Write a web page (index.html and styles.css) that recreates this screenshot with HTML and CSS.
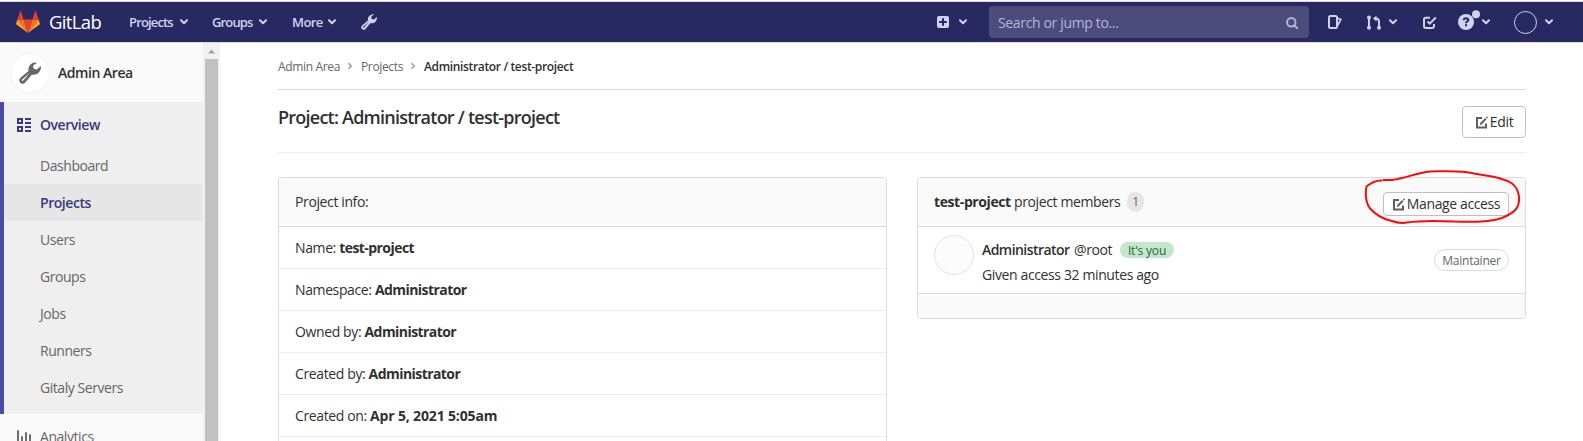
FILE: index.html
```
<!DOCTYPE html>
<html lang="en">
<head>
<meta charset="utf-8">
<title>Administrator / test-project</title>
<link rel="stylesheet" href="styles.css">
</head>
<body>
<svg class="defs" aria-hidden="true">
  <symbol id="chev" viewBox="0 0 8 6"><path d="M1 1.200 4 4.200 7 1.200" fill="none" stroke="currentColor" stroke-width="2" stroke-linecap="round" stroke-linejoin="round"/></symbol>
  <symbol id="sep" viewBox="0 0 6 8"><path d="M1.500 1.200 4.300 4 1.500 6.800" fill="none" stroke="#999" stroke-width="1.400"/></symbol>
  <symbol id="wrench" viewBox="0 0 16 16"><path fill-rule="evenodd" fill="currentColor" d="M11.200 0.400C9.300 0.700 7.500 2 7 4.200 6.800 5 6.800 5.800 6.900 6.500L1.100 11.400C0 12.300-.1 14 .9 15.050 1.900 16.100 3.600 16 4.500 14.900L9.300 9.200C11 9.500 12.900 9.200 14.200 7.900 15.700 6.500 16.200 4.700 15.800 2.900L13 5.500 10.700 4.900 10.200 2.800 13 .6C12.400.4 11.800.3 11.200.4ZM8.100 7.600 3.100 13.500C2.400 14.200 1.600 13.300 2.300 12.700Z"/></symbol>
  <symbol id="edit" viewBox="0 0 13 13"><path fill="none" stroke="currentColor" stroke-width="2" d="M7 2H2V11.500H11V7.500"/><path fill="currentColor" d="M4.800 9.200 5.300 6.700 10.200 1.900 11.600 3.300 6.900 8.200ZM10.800 1.200 11.900.2 13 1.300 12.100 2.500Z"/></symbol>
</svg>

<header class="navbar">
  <a class="brand">
    <svg class="tanuki" viewBox="0 0 24 22"><path fill="#e24329" d="M12 22 16.400 8.500H7.600Z"/><path fill="#fc6d26" d="M12 22 7.600 8.500H1.400ZM12 22 16.400 8.500H22.600Z"/><path fill="#fca326" d="M1.400 8.500.1 12.600C0 13 .1 13.400.4 13.600L12 22ZM22.600 8.500 23.900 12.600C24 13 23.900 13.400 23.600 13.600L12 22Z"/><path fill="#e24329" d="M1.400 8.500H7.600L4.900.4C4.800 0 4.300 0 4.100.4ZM22.600 8.500H16.400L19.100.4C19.200 0 19.700 0 19.900.4Z"/></svg>
    <span class="wordmark">GitLab</span>
  </a>
  <nav class="menu">
    <a class="m1"><span>Projects</span><svg class="chev"><use href="#chev"/></svg></a>
    <a class="m2"><span>Groups</span><svg class="chev"><use href="#chev"/></svg></a>
    <a class="m3"><span>More</span><svg class="chev"><use href="#chev"/></svg></a>
    <svg class="wrench"><use href="#wrench"/></svg>
  </nav>
  <div class="tools">
    <svg class="plus" viewBox="0 0 12 12"><rect width="12" height="12" rx="2" fill="currentColor"/><path d="M6 2.200V9.800M2.200 6H9.800" stroke="#292961" stroke-width="2"/></svg>
    <svg class="chev plus-chev"><use href="#chev"/></svg>
    <div class="search"><span>Search or jump to...</span>
      <svg class="glass" viewBox="0 0 12 12"><circle cx="5.300" cy="5.200" r="4.200" fill="none" stroke="currentColor" stroke-width="2"/><path d="M8.300 8.200 11.200 11.200" stroke="currentColor" stroke-width="2" stroke-linecap="round"/></svg></div>
    <svg class="issues" viewBox="0 0 14 14"><path d="M1 2.500Q1 1 2.500 1H7.500Q9 1 9 2.500V11.500Q9 13 7.500 13H2.500Q1 13 1 11.500Z" fill="none" stroke="currentColor" stroke-width="2"/><path d="M9.500 3.400 12.900 4.300 9.600 10.500" fill="none" stroke="currentColor" stroke-width="1.700" stroke-linejoin="round"/></svg>
    <svg class="merge" viewBox="0 0 14 15"><path d="M2 2V13M12 13V6.500Q12 3.500 8.500 3.500" fill="none" stroke="currentColor" stroke-width="2"/><g fill="currentColor"><circle cx="2" cy="2.500" r="2"/><circle cx="2" cy="12.700" r="2"/><circle cx="12" cy="12.700" r="2"/><path d="M6 3.500 9.500.4V6.600Z"/></g></svg>
    <svg class="chev merge-chev"><use href="#chev"/></svg>
    <svg class="todo" viewBox="0 0 14 13"><path d="M7 1.800H2.800Q1 1.800 1 3.600V10Q1 12 3 12H9Q11 12 11 10V8" fill="none" stroke="currentColor" stroke-width="2"/><path d="M4.500 5.500 6.700 7.600 12.800 1.500" fill="none" stroke="currentColor" stroke-width="2"/></svg>
    <svg class="help" viewBox="0 0 22 20"><circle cx="8" cy="12" r="8" fill="currentColor"/><path d="M5.700 10.300Q5.800 8.200 8 8.200T10.300 10.100Q10.300 11.100 9 11.700 8 12.200 8 13.200" fill="none" stroke="#292961" stroke-width="2"/><rect x="7" y="14.200" width="2" height="2" fill="#292961"/><circle cx="18" cy="4.200" r="4" fill="currentColor"/></svg>
    <svg class="chev help-chev"><use href="#chev"/></svg>
    <span class="me"></span>
    <svg class="chev me-chev"><use href="#chev"/></svg>
  </div>
</header>

<div class="layout">
  <aside class="sidebar">
    <div class="context"><span class="context-icon"><svg><use href="#wrench"/></svg></span><span class="context-name">Admin Area</span></div>
    <div class="section">
      <a class="top"><svg viewBox="0 0 14 14"><path d="M1 1H5V5H1ZM1 9H5V13H1Z" fill="none" stroke="currentColor" stroke-width="2"/><path d="M8 1H14M8 5H14M8 9H14M8 13H14" stroke="currentColor" stroke-width="2"/></svg><span>Overview</span></a>
      <a class="sub">Dashboard</a>
      <a class="sub current">Projects</a>
      <a class="sub">Users</a>
      <a class="sub">Groups</a>
      <a class="sub">Jobs</a>
      <a class="sub">Runners</a>
      <a class="sub">Gitaly Servers</a>
    </div>
    <a class="analytics"><svg viewBox="0 0 14 14"><path d="M1 1V14M5 7V14M9 3V14M13 5V14" stroke="currentColor" stroke-width="1.900" stroke-linecap="round"/></svg><span>Analytics</span></a>
  </aside>
  <div class="scrollbar"><svg viewBox="0 0 17 16"><path d="M5 10.500 8.500 6.500 12 10.500Z" fill="#a3a3a3"/></svg><div class="thumb"></div></div>

  <main class="content">
    <div class="crumbs"><span>Admin Area</span><svg><use href="#sep"/></svg><span>Projects</span><svg><use href="#sep"/></svg><b>Administrator / test-project</b></div>
    <div class="heading"><h1>Project: Administrator / test-project</h1><a class="btn edit"><svg><use href="#edit"/></svg><span>Edit</span></a></div>
    <div class="columns">
      <section class="card info">
        <div class="card-head"><span>Project info:</span></div>
        <div class="row"><span>Name: <b>test-project</b></span></div>
        <div class="row"><span>Namespace: <b>Administrator</b></span></div>
        <div class="row"><span>Owned by: <b>Administrator</b></span></div>
        <div class="row"><span>Created by: <b>Administrator</b></span></div>
        <div class="row"><span>Created on: <b class="date">Apr 5, 2021 5:05am</b></span></div>
        <div class="row"></div>
      </section>
      <section class="card members">
        <div class="card-head"><span class="members-title"><b>test-project</b> project members</span><span class="count">1</span>
          <a class="btn manage"><svg><use href="#edit"/></svg><span>Manage access</span></a>
          <svg class="scribble" viewBox="0 0 160 58"><path d="M18.500 11.500C13 11 8 13 2.500 17.500Q0 31 6 39.500C11 45 16 49 26 51.500Q36 55 43 53.500Q60 51 90 52.500C112 53 126 53 138 49C150 44 156 39 155 28Q154 19 148 14.500C138 8 126 7.500 110 4.500C96 1 79 2.500 66 2.500C52 4 42 9 28 11H19" /></svg></div>
        <div class="member"><span class="avatar"></span>
          <div class="who"><div class="line1"><b>Administrator</b><span class="user">@root</span><span class="you">It's you</span></div><div class="given">Given access 32 minutes ago</div></div>
          <span class="role">Maintainer</span></div>
        <div class="card-foot"></div>
      </section>
    </div>
  </main>
</div>
</body>
</html>
```

FILE: styles.css
```
* { box-sizing: border-box; }
body { margin: 0; height: 441px; overflow: hidden; background: #fff; color: #303030; font: 14px/20px "Open Sans", "Noto Sans", sans-serif; padding-top: 1px; white-space: nowrap; }
svg { display: block; flex: none; }
.defs { position: absolute; width: 0; height: 0; }
b { font-weight: 700; }

.navbar { display: flex; height: 42px; background: #292961; border-top: 1px solid #dbdbdb; border-bottom: 1px solid #dbdbdb; color: #d1d1f0; align-items: center; padding-left: 16px; }
.brand { display: flex; align-items: center; width: 113px; }
.tanuki { width: 24px; height: 22px; }
.wordmark { margin-left: 9px; color: #fff; font-size: 18.5px; letter-spacing: -.65px; }
.menu { display: flex; align-items: center; font-size: 13px; font-weight: 600; letter-spacing: -.8px; }
.menu a { display: flex; align-items: center; justify-content: space-between; }
.menu span { font-size: 13px; letter-spacing: -.85px; }
.m1 { width: 59px; margin-right: 24px; }
.m2 { width: 55px; margin-right: 25px; }
.m3 { width: 44px; margin-right: 25px; }
.menu .m3 span { letter-spacing: -.6px; }
.chev { width: 8px; height: 6px; }
.wrench { width: 16px; height: 16px; }
.tools { margin-left: auto; margin-right: 30px; display: flex; align-items: center; }
.plus { width: 12px; height: 12px; }
.plus-chev { margin: 0 22px 0 10px; }
.search { width: 320px; height: 32px; background: #4c4c7c; border-radius: 4px; display: flex; align-items: center; justify-content: space-between; padding: 1px 11px 0 9px; color: #b4b4d8; letter-spacing: -.35px; }
.glass { width: 12px; height: 12px; }
.issues { width: 14px; height: 14px; margin-left: 19px; }
.merge { width: 14px; height: 15px; margin-left: 25px; }
.merge-chev { margin-left: 8px; }
.todo { width: 14px; height: 13px; margin-left: 26px; }
.help { width: 22px; height: 20px; margin: -4px 0 0 21px; }
.help-chev { margin-left: 2px; }
.me { width: 23px; height: 23px; border: 1px solid #d1d1f0; border-radius: 50%; margin-left: 24px; }
.me-chev { margin-left: 8px; }

.layout { display: flex; height: 398px; overflow: hidden; }
.sidebar { width: 203px; background: #fafafa; color: #666; letter-spacing: -.45px; }
.context { height: 59px; display: flex; align-items: center; padding-left: 11px; }
.context-icon { width: 38px; height: 38px; border-radius: 50%; background: #fff; box-shadow: 0 0 0 1px #f2f2f2; display: flex; align-items: center; justify-content: center; }
.context-icon svg { width: 22px; height: 22px; }
.context-name { margin-left: 9px; color: #303030; font-weight: 600; }
.section { height: 312px; background: #efefef; border-left: 4px solid #4b4ba3; }
.top { display: flex; align-items: center; height: 46px; padding-left: 13px; color: #393982; font-weight: 600; }
.top svg, .analytics svg { width: 14px; height: 14px; }
.top span, .analytics span { margin-left: 9px; }
.sub { display: flex; align-items: center; height: 37px; padding-left: 36px; }
.top + .sub { margin-top: -1px; }
.current { background: #e6e6e6; color: #393982; font-weight: 600; }
.analytics { display: flex; align-items: center; height: 46px; padding-left: 17px; }
.scrollbar { width: 17px; background: #f1f1f1; }
.scrollbar svg { width: 17px; height: 16px; }
.thumb { width: 13px; height: 382px; margin-left: 2px; background: #c1c1c1; }

.content { width: 1248px; margin-left: 58px; }
.crumbs { height: 47px; border-bottom: 1px solid #dbdbdb; display: flex; align-items: center; padding-top: 2px; font-size: 12px; color: #666; letter-spacing: -.35px; }
.crumbs svg { width: 6px; height: 8px; margin: -2px 8px 0 7px; }
.crumbs b { color: #303030; font-weight: 600; }
.heading { height: 63px; border-bottom: 1px solid #eee; display: flex; justify-content: space-between; padding-top: 16px; }
h1 { margin: -1px 0 0; font-size: 18px; line-height: 24px; font-weight: 600; letter-spacing: -.76px; }
.btn { display: flex; align-items: center; justify-content: center; border: 1px solid #bfbfbf; border-radius: 4px; background: #fff; }
.btn svg { width: 13px; height: 13px; color: #606060; margin-right: 2px; }
.edit { width: 64px; height: 32px; letter-spacing: -.3px; }
.columns { display: flex; justify-content: space-between; margin-top: 24px; }
.card { width: 609px; border: 1px solid #dbdbdb; border-radius: 4px; letter-spacing: -.38px; }
.card b { letter-spacing: -.56px; }
.card .date { letter-spacing: -.15px; }
.card-head { position: relative; height: 49px; background: #fafafa; border-bottom: 1px solid #dbdbdb; padding: 0 16px; display: flex; align-items: center; border-radius: 3px 3px 0 0; }
.row { height: 42px; border-bottom: 1px solid #eee; padding: 0 16px; display: flex; align-items: center; }
.members { height: 142px; }
.members-title { width: 185px; }
.members-title b { letter-spacing: -.4px; }
.count { margin-left: 8px; width: 17px; height: 20px; border-radius: 10px; background: #e6e6e6; color: #666; font-size: 12px; display: flex; align-items: center; justify-content: center; }
.manage { width: 126px; height: 24px; margin: 4px 0 0 auto; }
.scribble { position: absolute; left: 446px; top: -9px; width: 160px; height: 58px; fill: none; stroke: #fa0a0a; stroke-width: 2; }
.member { height: 67px; border-bottom: 1px solid #dbdbdb; padding: 8px 16px; display: flex; }
.avatar { width: 40px; height: 40px; border: 1px solid #e3e3e3; border-radius: 50%; background: #fcfcfc; margin-right: 8px; }
.who { padding-top: 5px; }
.line1 { display: flex; align-items: center; height: 20px; }
.line1 b { font-weight: 600; width: 88px; }
.user { margin-left: 4px; width: 39px; }
.you { margin-left: 7px; width: 54px; height: 16px; border-radius: 8px; background: #c3e6cd; color: #24663b; font-size: 12px; line-height: 17px; letter-spacing: -.2px; text-align: center; }
.given { margin-top: 5px; }
.role { margin: 14px 0 0 auto; width: 75px; height: 22px; border: 1px solid #dbdbdb; border-radius: 11px; font-size: 12px; line-height: 21px; letter-spacing: -.25px; text-align: center; color: #666; }
.card-foot { height: 24px; background: #fafafa; border-radius: 0 0 3px 3px; }
```
